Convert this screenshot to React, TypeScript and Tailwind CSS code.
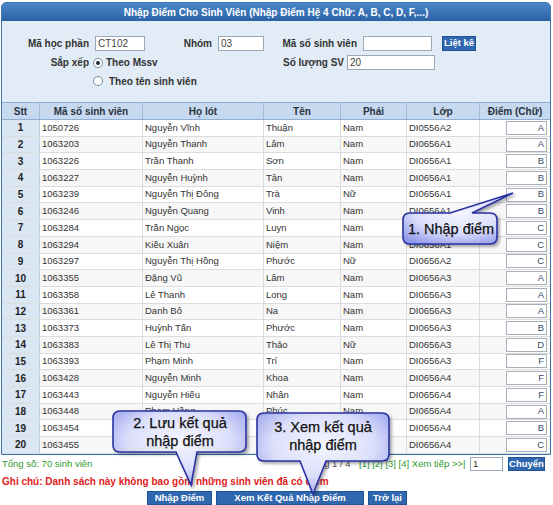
import React from 'react';

type Row = { ma: string; ho: string; ten: string; phai: string; lop: string; diem: string };

const rows: Row[] = [
  { ma: '1050726', ho: 'Nguyễn Vĩnh', ten: 'Thuận', phai: 'Nam', lop: 'DI0556A2', diem: 'A' },
  { ma: '1063203', ho: 'Nguyễn Thanh', ten: 'Lâm', phai: 'Nam', lop: 'DI0656A1', diem: 'A' },
  { ma: '1063226', ho: 'Trần Thanh', ten: 'Sơn', phai: 'Nam', lop: 'DI0656A1', diem: 'B' },
  { ma: '1063227', ho: 'Nguyễn Huỳnh', ten: 'Tân', phai: 'Nam', lop: 'DI0656A1', diem: 'B' },
  { ma: '1063239', ho: 'Nguyễn Thị Đông', ten: 'Trà', phai: 'Nữ', lop: 'DI0656A1', diem: 'B' },
  { ma: '1063246', ho: 'Nguyễn Quang', ten: 'Vinh', phai: 'Nam', lop: 'DI0656A1', diem: 'B' },
  { ma: '1063284', ho: 'Trần Ngọc', ten: 'Luyn', phai: 'Nam', lop: 'DI0656A1', diem: 'C' },
  { ma: '1063294', ho: 'Kiều Xuân', ten: 'Niệm', phai: 'Nam', lop: 'DI0656A1', diem: 'C' },
  { ma: '1063297', ho: 'Nguyễn Thị Hồng', ten: 'Phước', phai: 'Nữ', lop: 'DI0656A2', diem: 'C' },
  { ma: '1063355', ho: 'Đặng Vũ', ten: 'Lâm', phai: 'Nam', lop: 'DI0656A3', diem: 'A' },
  { ma: '1063358', ho: 'Lê Thanh', ten: 'Long', phai: 'Nam', lop: 'DI0656A3', diem: 'A' },
  { ma: '1063361', ho: 'Danh Bô', ten: 'Na', phai: 'Nam', lop: 'DI0656A3', diem: 'A' },
  { ma: '1063373', ho: 'Huỳnh Tấn', ten: 'Phước', phai: 'Nam', lop: 'DI0656A3', diem: 'B' },
  { ma: '1063383', ho: 'Lê Thị Thu', ten: 'Thảo', phai: 'Nữ', lop: 'DI0656A3', diem: 'D' },
  { ma: '1063393', ho: 'Phạm Minh', ten: 'Trí', phai: 'Nam', lop: 'DI0656A3', diem: 'F' },
  { ma: '1063428', ho: 'Nguyễn Minh', ten: 'Khoa', phai: 'Nam', lop: 'DI0656A4', diem: 'F' },
  { ma: '1063443', ho: 'Nguyễn Hiếu', ten: 'Nhân', phai: 'Nam', lop: 'DI0656A4', diem: 'F' },
  { ma: '1063448', ho: 'Phạm Hồng', ten: 'Phúc', phai: 'Nam', lop: 'DI0656A4', diem: 'A' },
  { ma: '1063454', ho: 'Lê Thanh', ten: 'Tú', phai: 'Nam', lop: 'DI0656A4', diem: 'B' },
  { ma: '1063455', ho: 'Nguyễn Thị', ten: 'Mai', phai: 'Nữ', lop: 'DI0656A4', diem: 'C' },
];

// rounded box with a pointer tail (tail on top edge or bottom edge)
function calloutPath(x0: number, y0: number, x1: number, y1: number, b1: number, b2: number, tx: number, ty: number, top: boolean) {
  const r = 7;
  if (top) {
    return `M${x0 + r},${y0} L${b1},${y0} L${tx},${ty} L${b2},${y0} L${x1 - r},${y0} Q${x1},${y0} ${x1},${y0 + r} L${x1},${y1 - r} Q${x1},${y1} ${x1 - r},${y1} L${x0 + r},${y1} Q${x0},${y1} ${x0},${y1 - r} L${x0},${y0 + r} Q${x0},${y0} ${x0 + r},${y0} Z`;
  }
  return `M${x0 + r},${y0} L${x1 - r},${y0} Q${x1},${y0} ${x1},${y0 + r} L${x1},${y1 - r} Q${x1},${y1} ${x1 - r},${y1} L${b2},${y1} L${tx},${ty} L${b1},${y1} L${x0 + r},${y1} Q${x0},${y1} ${x0},${y1 - r} L${x0},${y0 + r} Q${x0},${y0} ${x0 + r},${y0} Z`;
}

function Callouts() {
  const shapes = [
    calloutPath(403, 213, 497, 244, 450, 472, 513, 193, true),
    calloutPath(113, 411, 246, 452, 176, 197, 191, 485, false),
    calloutPath(257, 413, 389, 461, 300, 326, 313, 494, false),
  ];
  return (
    <svg className="pointer-events-none absolute left-0 top-0" width={553} height={505}>
      <defs>
        <radialGradient id="cfill" cx="50%" cy="40%" r="70%">
          <stop offset="0%" stopColor="#f4f5ff" />
          <stop offset="55%" stopColor="#dcdffb" />
          <stop offset="100%" stopColor="#8f97ea" />
        </radialGradient>
        <filter id="cshadow" x="-20%" y="-20%" width="140%" height="140%">
          <feDropShadow dx="2" dy="2" stdDeviation="1.5" floodColor="#000" floodOpacity="0.35" />
        </filter>
      </defs>
      {shapes.map((d, i) => (
        <path key={i} d={d} fill="url(#cfill)" stroke="#2a33a3" strokeWidth={1.6} filter="url(#cshadow)" />
      ))}
      <g fontFamily="'Liberation Sans', Arial, sans-serif" fontSize="14.5" fill="#111" textAnchor="middle" stroke="#111" strokeWidth={0.25}>
        <text x={451} y={234}>1. Nhập điểm</text>
        <text x={180} y={428}>2. Lưu kết quả</text>
        <text x={180} y={446}>nhập điểm</text>
        <text x={323} y={432}>3. Xem kết quả</text>
        <text x={323} y={450}>nhập điểm</text>
      </g>
    </svg>
  );
}

function Radio({ checked }: { checked?: boolean }) {
  return (
    <span className="flex h-[10px] w-[10px] items-center justify-center rounded-full border border-[#7a8a9a] bg-white">
      {checked && <span className="h-[4px] w-[4px] rounded-full bg-[#1a2a3a]" />}
    </span>
  );
}

function BlueBtn({ children, className }: { children: React.ReactNode; className: string }) {
  return (
    <div className={`flex items-center justify-center whitespace-nowrap border border-[#1f5596] bg-[#2f68ae] text-[9.5px] font-bold text-white ${className}`}>
      {children}
    </div>
  );
}

const cols = ['w-[38px]', 'w-[103px]', 'w-[121px]', 'w-[77px]', 'w-[66px]', 'w-[73px]', 'w-[70px]'];

export default function App() {
  return (
    <div className="relative h-[505px] w-[553px] overflow-hidden bg-white text-[#333] font-['Liberation_Sans',Arial,sans-serif]">
      <div className="ml-[1px] mt-[2px] w-[550px] rounded-t-[5px] border border-[#3a72b4]">
        {/* title */}
        <div className="flex h-[18px] items-center justify-center rounded-t-[4px] bg-gradient-to-b from-[#4a86c8] to-[#2a62a6] text-[10px] font-bold text-white">
          Nhập Điểm Cho Sinh Viên (Nhập Điểm Hệ 4 Chữ: A, B, C, D, F,...)
        </div>

        {/* form */}
        <div className="h-[81px] whitespace-nowrap bg-[#e1ecf7] pt-[15px] text-[10px] font-bold text-[#333]">
          <div className="flex h-[15px] items-center">
            <div className="w-[87px] text-right">Mã học phần</div>
            <div className="ml-[6px] flex h-[15px] w-[50px] items-center border border-[#9aa8b8] bg-white px-[2px] font-normal text-[#444]">CT102</div>
            <div className="w-[67px] text-right">Nhóm</div>
            <div className="ml-[6px] flex h-[15px] w-[46px] items-center border border-[#9aa8b8] bg-white px-[2px] font-normal text-[#444]">03</div>
            <div className="w-[93px] text-right">Mã số sinh viên</div>
            <div className="ml-[6px] h-[15px] w-[69px] border border-[#9aa8b8] bg-white" />
            <BlueBtn className="ml-[10px] h-[15px] w-[34px]">Liệt kê</BlueBtn>
          </div>
          <div className="mt-[4px] flex h-[15px] items-center">
            <div className="w-[87px] text-right">Sắp xếp</div>
            <div className="ml-[4px] flex w-[140px] items-center gap-[3px]">
              <Radio checked />
              <span>Theo Mssv</span>
            </div>
            <div className="w-[111px] text-right">Số lượng SV</div>
            <div className="ml-[3px] flex h-[15px] w-[88px] items-center border border-[#9aa8b8] bg-white px-[2px] font-normal text-[#444]">20</div>
          </div>
          <div className="mt-[4px] flex h-[14px] items-center">
            <div className="ml-[91px] flex items-center gap-[6px]">
              <Radio />
              <span>Theo tên sinh viên</span>
            </div>
          </div>
        </div>

        {/* table */}
        <div className="text-[9.5px]">
          <div className="flex h-[18px] border-y border-[#8eaed4] bg-[#c6d9ef] font-bold text-[#2a3440]">
            {['Stt', 'Mã số sinh viên', 'Họ lót', 'Tên', 'Phái', 'Lớp', 'Điểm (Chữ)'].map((h, i) => (
              <div key={h} className={`${cols[i]} flex items-center justify-center border-r border-[#9fbbdc] last:border-r-0 text-[10px]`}>
                {h}
              </div>
            ))}
          </div>
          {rows.map((r, i) => (
            <div key={r.ma} className={`flex h-[16.7px] border-b border-[#dcdcdc] ${i % 2 === 1 ? 'bg-[#f7f7f7]' : 'bg-white'}`}>
              <div className="flex w-[38px] items-center justify-center border-r border-[#b9cde4] bg-[#dbe6f3] text-[10px] font-bold text-[#222]">{i + 1}</div>
              <div className="flex w-[103px] items-center border-r border-[#dcdcdc] pl-[2px]">{r.ma}</div>
              <div className="flex w-[121px] items-center border-r border-[#dcdcdc] pl-[2px]">{r.ho}</div>
              <div className="flex w-[77px] items-center border-r border-[#dcdcdc] pl-[2px]">{r.ten}</div>
              <div className="flex w-[66px] items-center border-r border-[#dcdcdc] pl-[2px]">{r.phai}</div>
              <div className="flex w-[73px] items-center border-r border-[#dcdcdc] pl-[2px]">{r.lop}</div>
              <div className="flex w-[70px] items-center justify-end pr-[3px]">
                <div className="flex h-[14px] w-[41px] items-center justify-end border border-[#a8b0bc] bg-white pr-[2px] text-[#3a4a6a]">{r.diem}</div>
              </div>
            </div>
          ))}
        </div>
      </div>

      {/* footer */}
      <div className="flex h-[16px] items-center whitespace-nowrap pl-[2px] pt-[2px] text-[9.5px]">
        <span className="w-[303px] text-[#2e9a2e]">Tổng số: 70 sinh viên</span>
        <span className="w-[54px] text-[#555]">Trang 1 / 4</span>
        <span className="w-[111px] text-[#2e9a2e]">[1] [2] [3] [4] Xem tiếp &gt;&gt;|</span>
        <div className="flex h-[14px] w-[33px] items-center border border-[#9aa8b8] bg-white px-[2px]">1</div>
        <BlueBtn className="ml-[5px] h-[14px] w-[37px]">Chuyển</BlueBtn>
      </div>
      <div className="mt-[3px] whitespace-nowrap pl-[2px] text-[10px] font-bold text-[#e01b1b]">
        Ghi chú: Danh sách này không bao gồm những sinh viên đã có điểm
      </div>
      <div className="mt-[2px] flex pl-[147px]">
        <BlueBtn className="h-[14px] w-[65px]">Nhập Điểm</BlueBtn>
        <BlueBtn className="ml-[4px] h-[14px] w-[148px]">Xem Kết Quả Nhập Điểm</BlueBtn>
        <BlueBtn className="ml-[4px] h-[14px] w-[39px]">Trở lại</BlueBtn>
      </div>

      <Callouts />
    </div>
  );
}
